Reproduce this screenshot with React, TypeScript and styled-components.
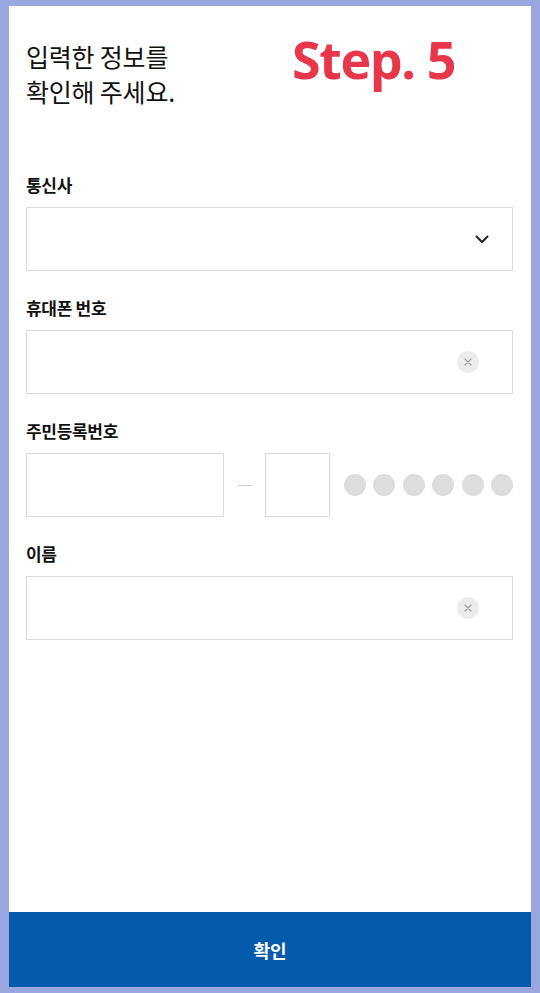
import React from "react";
import styled, { createGlobalStyle } from "styled-components";

const Global = createGlobalStyle`
  html, body { margin: 0; padding: 0; background: #9aa6df; }
  * { box-sizing: border-box; }
  body { font-family: "Noto Sans CJK KR", "Noto Sans", sans-serif; }
`;

const Frame = styled.div`
  width: 540px;
  height: 993px;
  padding: 6px 9px 6px 9px;
  display: flex;
  flex-direction: column;
  background: #9aa6df;
`;

const Panel = styled.main`
  position: relative;
  flex: 1;
  background: #ffffff;
  padding: 33px 18px 0 17px;
  display: flex;
  flex-direction: column;
`;

const Title = styled.h1`
  margin: 0;
  font-size: 25px;
  line-height: 35px;
  font-weight: 400;
  color: #111111;
  letter-spacing: -0.2px;
`;

const StepBadge = styled.div`
  position: absolute;
  left: 283px;
  top: 27px;
  font-family: "Open Sans", "Noto Sans", sans-serif;
  font-weight: 700;
  font-size: 52px;
  line-height: 52px;
  color: #e8364b;
  letter-spacing: -1.4px;
`;

const Form = styled.div`
  margin-top: 64px;
  display: flex;
  flex-direction: column;
  gap: 25px;
`;

const Field = styled.div`
  display: flex;
  flex-direction: column;
  gap: 10px;
`;

const Label = styled.div`
  font-size: 17px;
  line-height: 24px;
  font-weight: 700;
  color: #111111;
  letter-spacing: -0.3px;
`;

const InputBox = styled.div<{ $pr?: number }>`
  height: 64px;
  border: 1px solid #dadada;
  background: #fff;
  display: flex;
  align-items: center;
  justify-content: flex-end;
  padding: 0 ${(p) => p.$pr ?? 24}px 0 16px;
`;

const ClearButton = styled.span`
  width: 22px;
  height: 22px;
  border-radius: 50%;
  background: #ececec;
  display: flex;
  align-items: center;
  justify-content: center;
`;

const RrnRow = styled.div`
  display: flex;
  align-items: center;
  height: 64px;
`;

const RrnBox = styled.div<{ $w: number }>`
  width: ${(p) => p.$w}px;
  height: 64px;
  border: 1px solid #dadada;
  flex-shrink: 0;
`;

const Dash = styled.span`
  width: 14px;
  height: 1px;
  background: #cfcfcf;
  margin: 0 13px 0 14px;
  flex-shrink: 0;
`;

const Dots = styled.div`
  flex: 1;
  margin-left: 14px;
  display: flex;
  justify-content: space-between;
`;

const Dot = styled.span`
  width: 22px;
  height: 22px;
  border-radius: 50%;
  background: #dddddd;
`;

const ConfirmButton = styled.button`
  height: 75px;
  border: none;
  background: #055bab;
  color: #ffffff;
  font-family: "Noto Sans CJK KR", "Noto Sans", sans-serif;
  font-size: 18px;
  font-weight: 700;
  display: flex;
  align-items: center;
  justify-content: center;
  padding: 0;
`;

const Chevron = () => (
  <svg width="14" height="9" viewBox="0 0 14 9" fill="none">
    <path d="M1.5 1.5 L7 7 L12.5 1.5" stroke="#222" strokeWidth="2" strokeLinecap="round" strokeLinejoin="round" />
  </svg>
);

const Cross = () => (
  <svg width="8" height="8" viewBox="0 0 8 8">
    <path d="M1 1 L7 7 M7 1 L1 7" stroke="#9a9a9a" strokeWidth="1.2" strokeLinecap="round" />
  </svg>
);

export default function App() {
  return (
    <>
      <Global />
      <Frame>
        <Panel>
          <Title>
            입력한 정보를
            <br />
            확인해 주세요.
          </Title>
          <StepBadge>Step. 5</StepBadge>
          <Form>
            <Field>
              <Label>통신사</Label>
              <InputBox $pr={23}>
                <Chevron />
              </InputBox>
            </Field>
            <Field>
              <Label>휴대폰 번호</Label>
              <InputBox $pr={33}>
                <ClearButton>
                  <Cross />
                </ClearButton>
              </InputBox>
            </Field>
            <Field>
              <Label>주민등록번호</Label>
              <RrnRow>
                <RrnBox $w={198} />
                <Dash />
                <RrnBox $w={65} />
                <Dots>
                  {Array.from({ length: 6 }).map((_, i) => (
                    <Dot key={i} />
                  ))}
                </Dots>
              </RrnRow>
            </Field>
            <Field>
              <Label>이름</Label>
              <InputBox $pr={33}>
                <ClearButton>
                  <Cross />
                </ClearButton>
              </InputBox>
            </Field>
          </Form>
        </Panel>
        <ConfirmButton>확인</ConfirmButton>
      </Frame>
    </>
  );
}
